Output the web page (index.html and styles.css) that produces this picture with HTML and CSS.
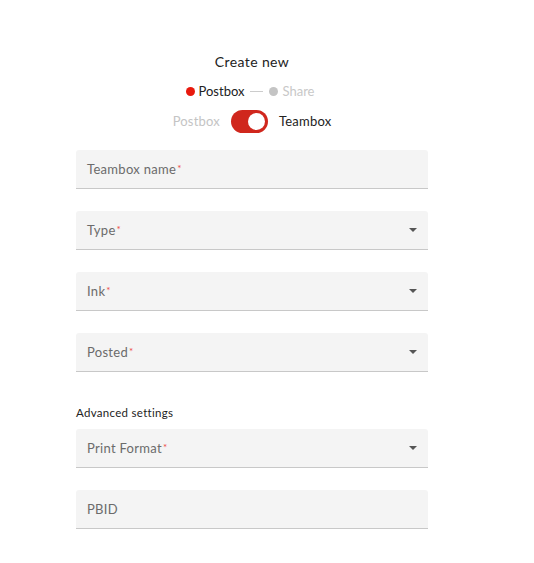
FILE: index.html
```html
<!DOCTYPE html>
<html lang="en">
<head>
  <meta charset="UTF-8">
  <title>Create new</title>
  <link rel="stylesheet" href="styles.css">
</head>
<body>
  <div class="container">
    <h2 class="title">Create new</h2>

    <div class="stepper">
      <span class="step active"><span class="dot"></span>Postbox</span>
      <span class="step-line"></span>
      <span class="step"><span class="dot"></span>Share</span>
    </div>

    <div class="switch-row">
      <span class="switch-label off">Postbox</span>
      <span class="switch"><span class="knob"></span></span>
      <span class="switch-label">Teambox</span>
    </div>

    <div class="field">
      <span class="label">Teambox name<span class="req">*</span></span>
    </div>
    <div class="field select">
      <span class="label">Type<span class="req">*</span></span>
      <span class="arrow"></span>
    </div>
    <div class="field select">
      <span class="label">Ink<span class="req">*</span></span>
      <span class="arrow"></span>
    </div>
    <div class="field select">
      <span class="label">Posted<span class="req">*</span></span>
      <span class="arrow"></span>
    </div>

    <div class="section-title">Advanced settings</div>

    <div class="field select">
      <span class="label">Print Format<span class="req">*</span></span>
      <span class="arrow"></span>
    </div>
    <div class="field">
      <span class="label">PBID</span>
    </div>
  </div>
</body>
</html>
```

FILE: styles.css
```css
body {
  margin: 0;
  font-family: Lato, sans-serif;
  background: white;
  color: #222;
}
.container {
  width: 352px;
  margin-left: 76px;
  padding-top: 52px;
  display: flex;
  flex-direction: column;
}
.title {
  margin: 0;
  text-align: center;
  font-size: 14px;
  font-weight: normal;
  line-height: 20px;
  letter-spacing: 0.4px;
}
.stepper {
  display: flex;
  justify-content: center;
  align-items: center;
  margin-top: 9px;
  margin-left: -4px;
  height: 20px;
  font-size: 13px;
  letter-spacing: 0;
}
.step {
  display: flex;
  align-items: center;
  color: #c8c8c8;
}
.step.active {
  color: #222;
}
.dot {
  width: 9px;
  height: 9px;
  border-radius: 50%;
  background: #c4c4c4;
  margin-right: 4px;
}
.step.active .dot {
  background: #e8190e;
}
.step-line {
  width: 13px;
  height: 1px;
  background: #ccc;
  margin: 0 6px;
}
.switch-row {
  display: flex;
  justify-content: center;
  align-items: center;
  margin-top: 8px;
  height: 24px;
  font-size: 13px;
  letter-spacing: 0.2px;
}
.switch-label.off {
  color: #c4c4c4;
}
.switch {
  width: 37px;
  height: 23px;
  border-radius: 12px;
  background: #d0271d;
  margin: 0 11px;
  display: flex;
  justify-content: flex-end;
  align-items: center;
  padding: 0 3px;
  box-sizing: border-box;
}
.knob {
  width: 17px;
  height: 17px;
  border-radius: 50%;
  background: white;
}
.field {
  height: 39px;
  background: #f4f4f4;
  border-bottom: 1px solid #c8c8c8;
  border-radius: 3px 3px 0 0;
  box-sizing: border-box;
  display: flex;
  align-items: center;
  justify-content: space-between;
  padding: 0 11px;
  margin-top: 22px;
  font-size: 13px;
  letter-spacing: 0.3px;
  color: #6b6b6b;
}
.switch-row + .field {
  margin-top: 17px;
}
.req {
  color: #ee4b44;
  font-size: 10px;
  vertical-align: 2px;
  margin-left: 1px;
}
.arrow {
  width: 0;
  height: 0;
  border-left: 4px solid transparent;
  border-right: 4px solid transparent;
  border-top: 4px solid #555;
}
.section-title {
  margin-top: 34px;
  font-size: 11.5px;
  letter-spacing: 0.3px;
  line-height: 14px;
  color: #222;
}
.section-title + .field {
  margin-top: 9px;
}
```
